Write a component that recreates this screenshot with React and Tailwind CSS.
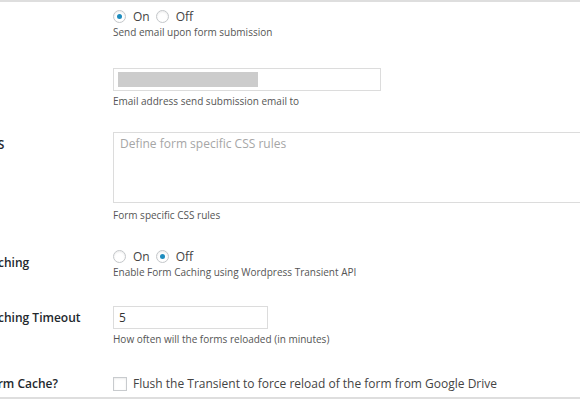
import React from "react";

const font = { fontFamily: '"Open Sans", "Noto Sans", sans-serif' };

function Radio({ checked }) {
  return (
    <span className="inline-flex h-[13px] w-[13px] items-center justify-center rounded-full border border-[#c4c7ca] bg-white shadow-[inset_0_1px_2px_rgba(0,0,0,0.08)]">
      {checked && <span className="h-[5px] w-[5px] rounded-full bg-[#1e8cbe]" />}
    </span>
  );
}

function OnOff({ on }) {
  return (
    <div className="flex h-[17px] items-center text-[12px] text-[#444]">
      <Radio checked={on} />
      <span className="ml-[7px] mr-[6px]">On</span>
      <Radio checked={!on} />
      <span className="ml-[7px]">Off</span>
    </div>
  );
}

function Desc({ children, className = "" }) {
  return <div className={"h-[14px] text-[10px] leading-[14px] text-[#555] whitespace-nowrap " + className}>{children}</div>;
}

function Label({ children, className = "" }) {
  return (
    <div className={"w-[163px] shrink-0 text-[12px] font-semibold leading-[17px] text-[#23282d] whitespace-nowrap " + className}>
      {children}
    </div>
  );
}

export default function App() {
  return (
    <div className="h-[400px] w-[580px] overflow-hidden bg-white" style={font}>
      <div className="ml-[-50px] flex h-[399px] w-[640px] flex-col border-y-2 border-[#dedede]">
        {/* Row 1 */}
        <div className="flex pt-[6px]">
          <Label />
          <div>
            <OnOff on={true} />
            <Desc>Send email upon form submission</Desc>
          </div>
        </div>
        {/* Row 2 */}
        <div className="flex pt-[29px]">
          <Label />
          <div>
            <div className="flex h-[23px] w-[268px] items-center border border-[#dcdcdc] bg-white px-[4px]">
              <div className="h-[15px] w-[140px] bg-[#cccccc]" />
            </div>
            <Desc className="mt-[3px]">Email address send submission email to</Desc>
          </div>
        </div>
        {/* Row 3 */}
        <div className="flex pt-[24px]">
          <Label className="mt-[4px]">Form CSS</Label>
          <div>
            <div className="h-[71px] w-[480px] border border-[#dcdcdc] bg-white px-[6px] pt-[2px] text-[12px] leading-[18px] text-[#a6a6a6]">
              Define form specific CSS rules
            </div>
            <Desc className="mt-[5px]">Form specific CSS rules</Desc>
          </div>
        </div>
        {/* Row 4 */}
        <div className="flex pt-[26px]">
          <Label className="mt-[6px]">Form Caching</Label>
          <div>
            <OnOff on={false} />
            <Desc>Enable Form Caching using Wordpress Transient API</Desc>
          </div>
        </div>
        {/* Row 5 */}
        <div className="flex pt-[27px]">
          <Label className="mt-[3px]">Form Caching Timeout</Label>
          <div>
            <div className="flex h-[23px] w-[155px] items-center border border-[#dcdcdc] bg-white px-[5px] text-[12px] text-[#333]">
              5
            </div>
            <Desc className="mt-[3px]">How often will the forms reloaded (in minutes)</Desc>
          </div>
        </div>
        {/* Row 6 */}
        <div className="flex pt-[29px]">
          <Label>Flush Form Cache?</Label>
          <div className="flex h-[18px] items-center text-[12px] text-[#444]">
            <span className="h-[14px] w-[14px] border border-[#c8cbce] bg-white shadow-[inset_0_1px_2px_rgba(0,0,0,0.08)]" />
            <span className="ml-[6px] whitespace-nowrap">Flush the Transient to force reload of the form from Google Drive</span>
          </div>
        </div>
      </div>
    </div>
  );
}
